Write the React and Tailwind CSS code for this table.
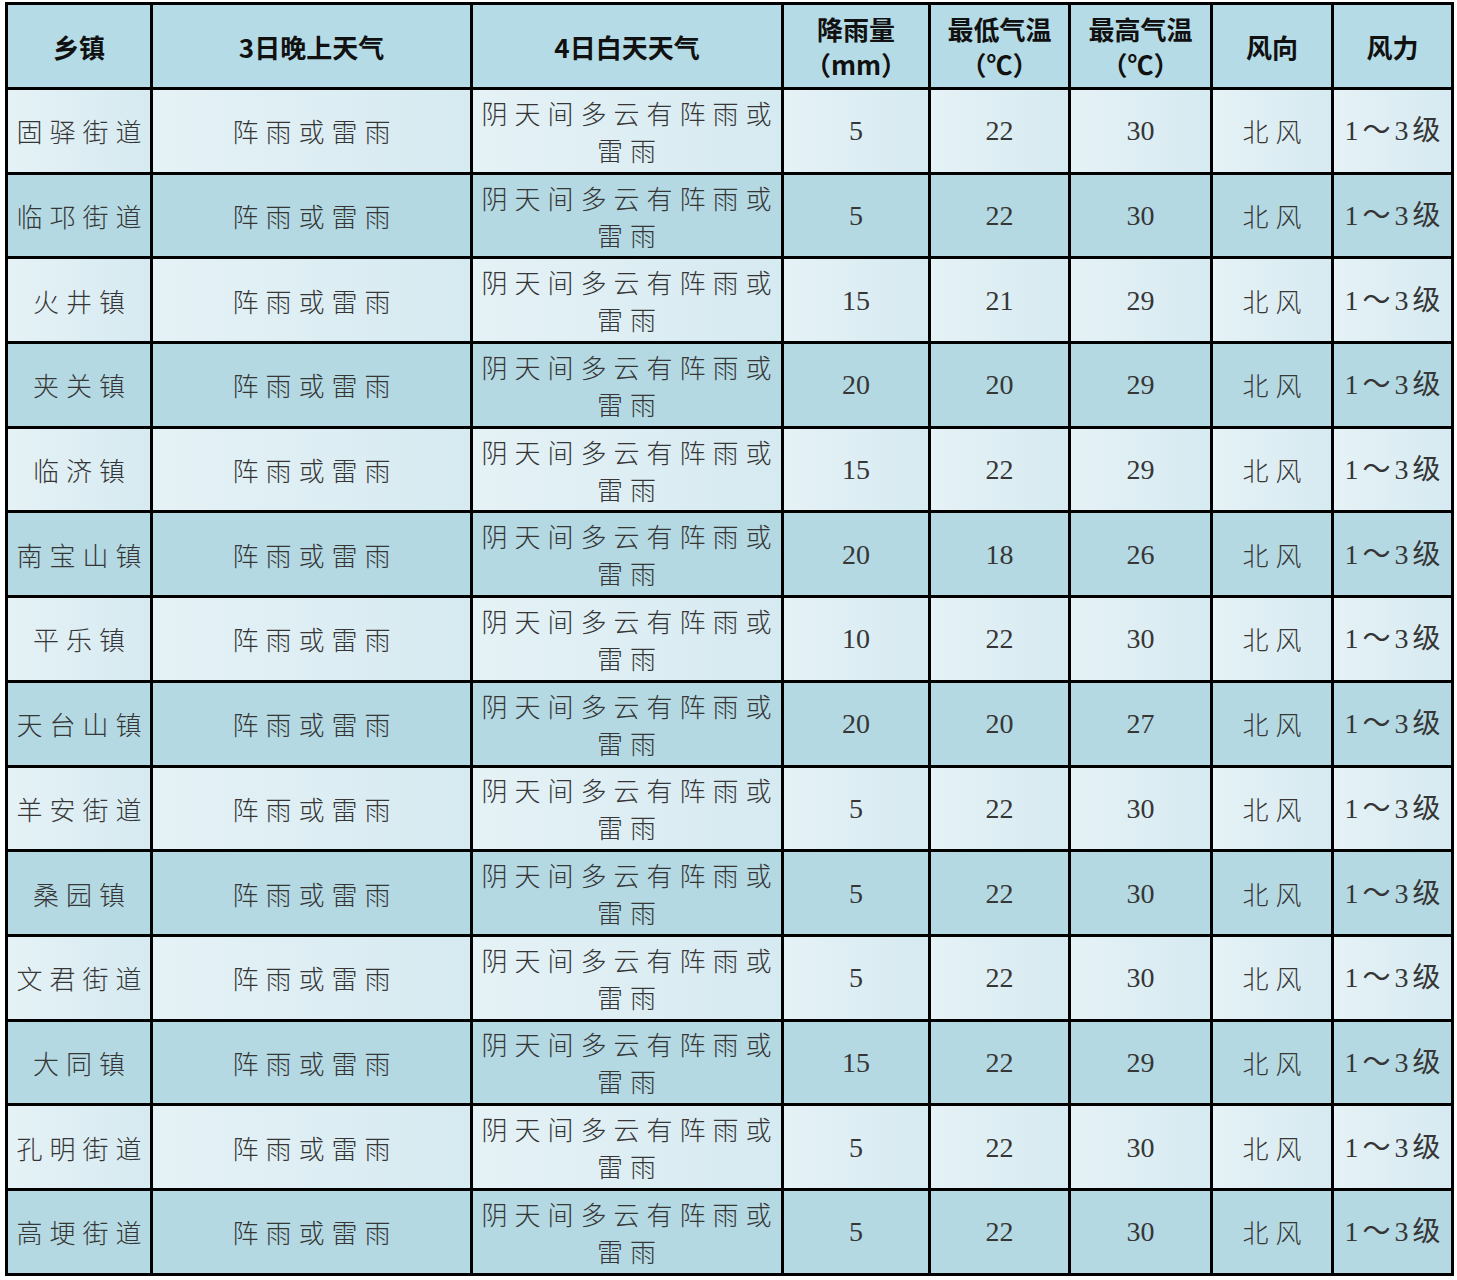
import React from 'react';

const rows = [
  ['固驿街道', '5', '22', '30'],
  ['临邛街道', '5', '22', '30'],
  ['火井镇', '15', '21', '29'],
  ['夹关镇', '20', '20', '29'],
  ['临济镇', '15', '22', '29'],
  ['南宝山镇', '20', '18', '26'],
  ['平乐镇', '10', '22', '30'],
  ['天台山镇', '20', '20', '27'],
  ['羊安街道', '5', '22', '30'],
  ['桑园镇', '5', '22', '30'],
  ['文君街道', '5', '22', '30'],
  ['大同镇', '15', '22', '29'],
  ['孔明街道', '5', '22', '30'],
  ['高埂街道', '5', '22', '30'],
];

const cjk = { fontFamily: '"Noto Sans CJK SC", sans-serif' };
const num = { fontFamily: '"Liberation Serif", "Noto Sans CJK SC", serif' };

function Head({ children }) {
  return (
    <div
      className="bg-[#b5dce6] flex items-center justify-center text-center text-[26px] leading-[35px] font-bold text-[#111]"
      style={cjk}
    >
      {children}
    </div>
  );
}

function Cell({ children, dark, serif, wide, spaced }) {
  return (
    <div
      className={
        'flex items-center justify-center text-center text-[#363636] ' +
        (dark ? 'bg-[#b4d9e3] ' : 'bg-gradient-to-r from-[#e5f2f6] to-[#d6eaf1] ') +
        (serif
          ? 'text-[28px] ' + (spaced ? 'tracking-[4px] pl-[4px] ' : '')
          : 'text-[26px] font-light tracking-[7px] pl-[7px] ') +
        (wide ? 'leading-[37px] pr-[1px]' : 'leading-[37px]')
      }
      style={serif ? num : cjk}
    >
      {children}
    </div>
  );
}

export default function App() {
  return (
    <div className="min-h-screen bg-white pt-[2px] pl-[5px]">
      <div className="w-[1449px] grid grid-cols-[142px_317px_308px_144px_137px_139px_118px_117px] grid-rows-[82px_repeat(14,81.7px)] gap-[3px] p-[3px] bg-black">
        <Head>乡镇</Head>
        <Head>3日晚上天气</Head>
        <Head>4日白天天气</Head>
        <Head>
          降雨量
          <br />
          （mm）
        </Head>
        <Head>
          最低气温
          <br />
          （℃）
        </Head>
        <Head>
          最高气温
          <br />
          （℃）
        </Head>
        <Head>风向</Head>
        <Head>风力</Head>
        {rows.map((r, i) => {
          const dark = i % 2 === 1;
          return (
            <React.Fragment key={r[0]}>
              <Cell dark={dark}>{r[0]}</Cell>
              <Cell dark={dark}>阵雨或雷雨</Cell>
              <Cell dark={dark} wide>
                阴天间多云有阵雨或雷雨
              </Cell>
              <Cell dark={dark} serif>{r[1]}</Cell>
              <Cell dark={dark} serif>{r[2]}</Cell>
              <Cell dark={dark} serif>{r[3]}</Cell>
              <Cell dark={dark}>北风</Cell>
              <Cell dark={dark} serif spaced>1～3级</Cell>
            </React.Fragment>
          );
        })}
      </div>
    </div>
  );
}
